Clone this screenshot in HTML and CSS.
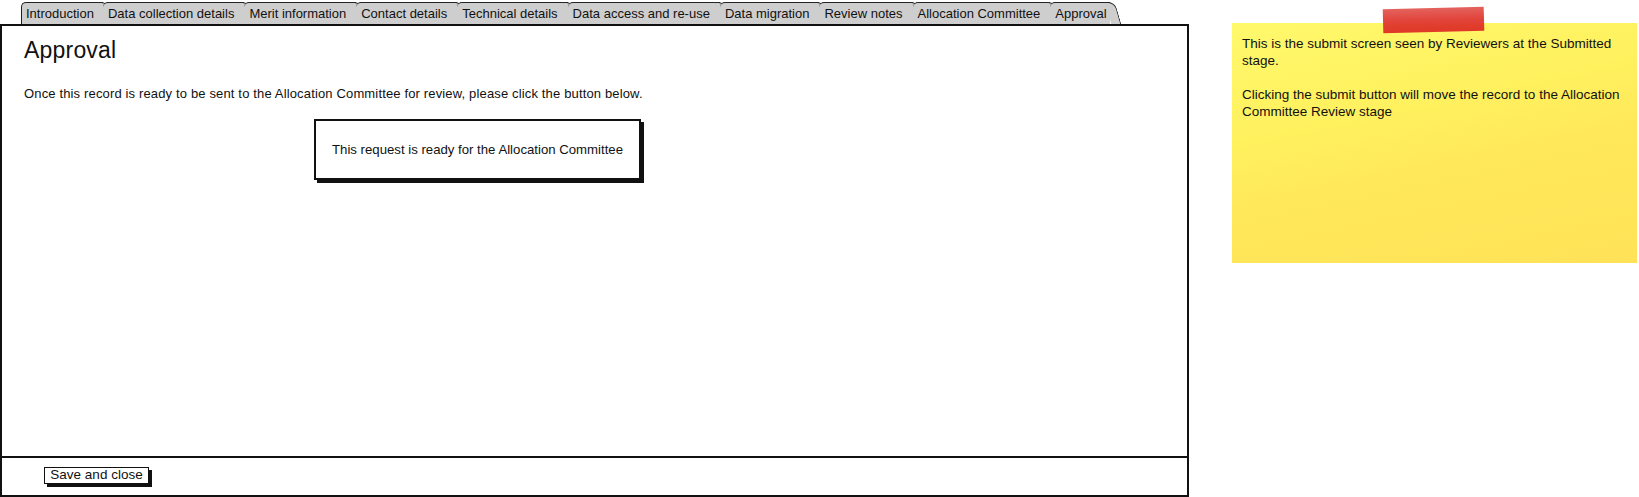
FILE: index.html
```html
<!DOCTYPE html>
<html>
<head>
<meta charset="utf-8">
<link rel="stylesheet" href="styles.css">
</head>
<body>
<div class="page">
  <div class="app">
    <div class="tabs">
      <div class="tab first">Introduction</div>
      <div class="tab">Data collection details</div>
      <div class="tab">Merit information</div>
      <div class="tab">Contact details</div>
      <div class="tab">Technical details</div>
      <div class="tab">Data access and re-use</div>
      <div class="tab">Data migration</div>
      <div class="tab">Review notes</div>
      <div class="tab">Allocation Committee</div>
      <div class="tab last">Approval</div>
    </div>
    <div class="panel">
      <div class="content">
        <h1 class="title">Approval</h1>
        <p class="intro">Once this record is ready to be sent to the Allocation Committee for review, please click the button below.</p>
        <div class="submit-box">This request is ready for the Allocation Committee</div>
      </div>
      <div class="footer">
        <div class="save-btn">Save and close</div>
      </div>
    </div>
  </div>
  <div class="note">
    <div class="tape"></div>
    <p>This is the submit screen seen by Reviewers at the Submitted stage.</p>
    <p>Clicking the submit button will move the record to the Allocation Committee Review stage</p>
  </div>
</div>
</body>
</html>
```

FILE: styles.css
```css
* { box-sizing: border-box; }

body {
  margin: 0;
  background: #fff;
  font-family: "Liberation Sans", Arial, sans-serif;
  color: #111;
}

.page {
  display: flex;
  align-items: flex-start;
}

.app {
  width: 1189px;
  flex: none;
}

.tabs {
  display: flex;
  align-items: flex-end;
  height: 24px;
  padding-left: 21px;
}

.tab {
  position: relative;
  height: 22px;
  line-height: 21px;
  font-size: 13px;
  background: #cecece;
  border-top: 1px solid #222;
  border-top-left-radius: 5px;
  padding: 0 10px 0 5px;
  white-space: nowrap;
  z-index: 1;
}

.tab.first {
  border-left: 1px solid #222;
  padding-left: 4px;
  padding-right: 9px;
}

.tab::after {
  content: "";
  position: absolute;
  top: -1px;
  right: -5px;
  width: 9px;
  height: 22px;
  background: #cecece;
  border-top: 1px solid #222;
  border-right: 1.5px solid #222;
  border-top-right-radius: 7px;
  transform: skewX(16deg);
  transform-origin: top left;
  z-index: 2;
}

.tab.last {
  padding-right: 3px;
}

.panel {
  height: 473px;
  border: 2px solid #111;
  display: flex;
  flex-direction: column;
  position: relative;
  z-index: 3;
  background: #fff;
}

.content {
  flex: 1;
  padding: 10px 22px 0 22px;
}

.title {
  margin: 0;
  font-size: 23px;
  font-weight: normal;
  line-height: 28px;
  letter-spacing: 0.2px;
}

.intro {
  margin: 22px 0 0 0;
  font-size: 13px;
  line-height: 16px;
  letter-spacing: 0.15px;
}

.submit-box {
  margin: 17px 0 0 290px;
  width: 327px;
  height: 61px;
  border: 2px solid #111;
  box-shadow: 3px 3px 0 #111;
  display: flex;
  align-items: center;
  justify-content: center;
  font-size: 13.2px;
}

.footer {
  height: 39px;
  border-top: 2px solid #111;
  padding: 9px 0 0 42px;
}

.save-btn {
  width: 105px;
  height: 17px;
  border: 1.5px solid #111;
  box-shadow: 3px 3px 0 #111;
  font-size: 13.5px;
  line-height: 14px;
  text-align: center;
  background: #fff;
}

.note {
  position: relative;
  margin: 23px 0 0 43px;
  width: 405px;
  height: 240px;
  padding: 12px 10px 0 10px;
  background: linear-gradient(168deg, #fff96c 0%, #fff15f 35%, #ffe85a 60%, #ffe257 100%);
  font-size: 13.5px;
  line-height: 17px;
}

.note p {
  margin: 0 0 17px 0;
  width: 388px;
}

.tape {
  position: absolute;
  left: 151px;
  top: -15px;
  width: 101px;
  height: 24px;
  background: linear-gradient(180deg, #e25a55 0%, #e03a30 50%, #dd2e24 100%);
  transform: rotate(-1.5deg);
  opacity: 0.95;
}
```
